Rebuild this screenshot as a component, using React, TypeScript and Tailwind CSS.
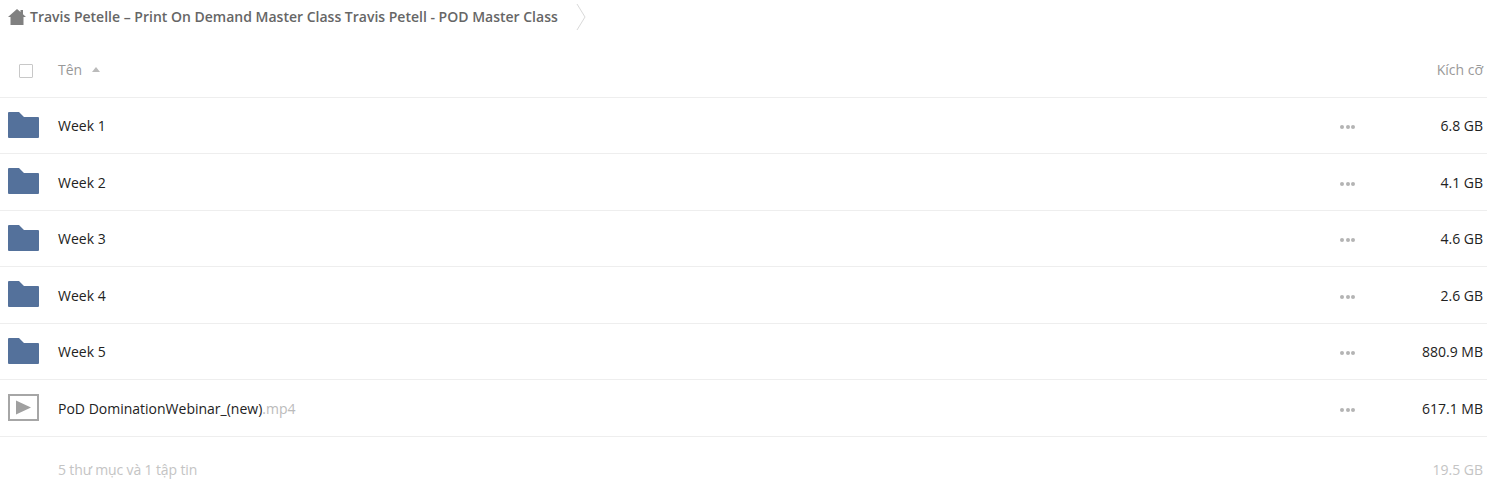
const ROWS = [
  { name: "Week 1", size: "6.8 GB" },
  { name: "Week 2", size: "4.1 GB" },
  { name: "Week 3", size: "4.6 GB" },
  { name: "Week 4", size: "2.6 GB" },
  { name: "Week 5", size: "880.9 MB" },
];

const Folder = () => (
  <svg viewBox="0 0 31 26" className="h-[26px] w-[31px]">
    <path d="M0 1a1 1 0 011-1h10l5 5h14a1 1 0 011 1v19a1 1 0 01-1 1H1a1 1 0 01-1-1z" fill="#54719b" />
  </svg>
);

const Video = () => (
  <svg viewBox="0 0 31 27" className="h-[27px] w-[31px]">
    <rect x="1" y="1" width="29" height="25" fill="#fff" stroke="#a6a6a6" strokeWidth="2" />
    <path d="M8 6.5l15 7-15 7z" fill="#a0a0a0" />
  </svg>
);

const Dots = () => (
  <div className="flex w-[16px] gap-[1.5px]">
    <span className="h-[4px] w-[4px] rounded-full bg-[#b4b4b4]" />
    <span className="h-[4px] w-[4px] rounded-full bg-[#b4b4b4]" />
    <span className="h-[4px] w-[4px] rounded-full bg-[#b4b4b4]" />
  </div>
);

function Row({ icon, size, children }: { icon: React.ReactNode; size: string; children: React.ReactNode }) {
  return (
    <div className="flex h-[56.5px] items-center border-b border-[#eeeeee] pl-[8px] pr-[4px] pt-[1px]">
      <div className="mb-[2px] flex w-[50px] shrink-0 items-center">{icon}</div>
      <div className="flex-1 text-[14px] text-[#222]">{children}</div>
      <div className="mt-[3px]"><Dots /></div>
      <div className="w-[127px] text-right text-[14px] text-[#222]">{size}</div>
    </div>
  );
}

export default function App() {
  return (
    <div className="h-[496px] w-[1487px] overflow-hidden bg-white font-['Open_Sans',sans-serif]">
      {/* breadcrumb */}
      <div className="flex h-[34px] items-center pl-[8px]">
        <svg viewBox="0 0 18 16" className="h-[16px] w-[18px] shrink-0">
          <path d="M9 0l3.5 3V1H15v4.2L18 8h-2.5v8h-13V8H0z" fill="#808080" />
        </svg>
        <span className="mb-[2px] ml-[4px] text-[14px] font-semibold text-[#666]">
          Travis Petelle – Print On Demand Master Class Travis Petell - POD Master Class
        </span>
        <svg viewBox="0 0 10 28" className="ml-[18px] h-[28px] w-[10px] shrink-0" fill="none">
          <path d="M1 1l8 13-8 13" stroke="#d9d9d9" />
        </svg>
      </div>

      {/* table head */}
      <div className="flex h-[63.5px] items-center border-b border-[#eeeeee] pl-[19px] pr-[4px] pt-[8px]">
        <span className="mt-[4px] h-[14px] w-[14px] rounded-[1px] border border-[#c8c8c8]" />
        <span className="ml-[25px] text-[14px] text-[#999]">Tên</span>
        <span className="ml-[10px] h-0 w-0 border-x-[4.5px] border-b-[5px] border-x-transparent border-b-[#bbb]" />
        <span className="ml-auto text-[14px] text-[#999]">Kích cỡ</span>
      </div>

      {ROWS.map((r) => (
        <Row key={r.name} icon={<Folder />} size={r.size}>{r.name}</Row>
      ))}
      <Row icon={<Video />} size="617.1 MB">
        PoD DominationWebinar_(new)<span className="text-[#bbb]">.mp4</span>
      </Row>

      {/* totals */}
      <div className="flex h-[66px] items-center pl-[58px] pr-[4px] text-[14px] text-[#c4c4c4]">
        <span className="tracking-[-0.14px]">5 thư mục và 1 tập tin</span>
        <span className="ml-auto">19.5 GB</span>
      </div>
    </div>
  );
}
